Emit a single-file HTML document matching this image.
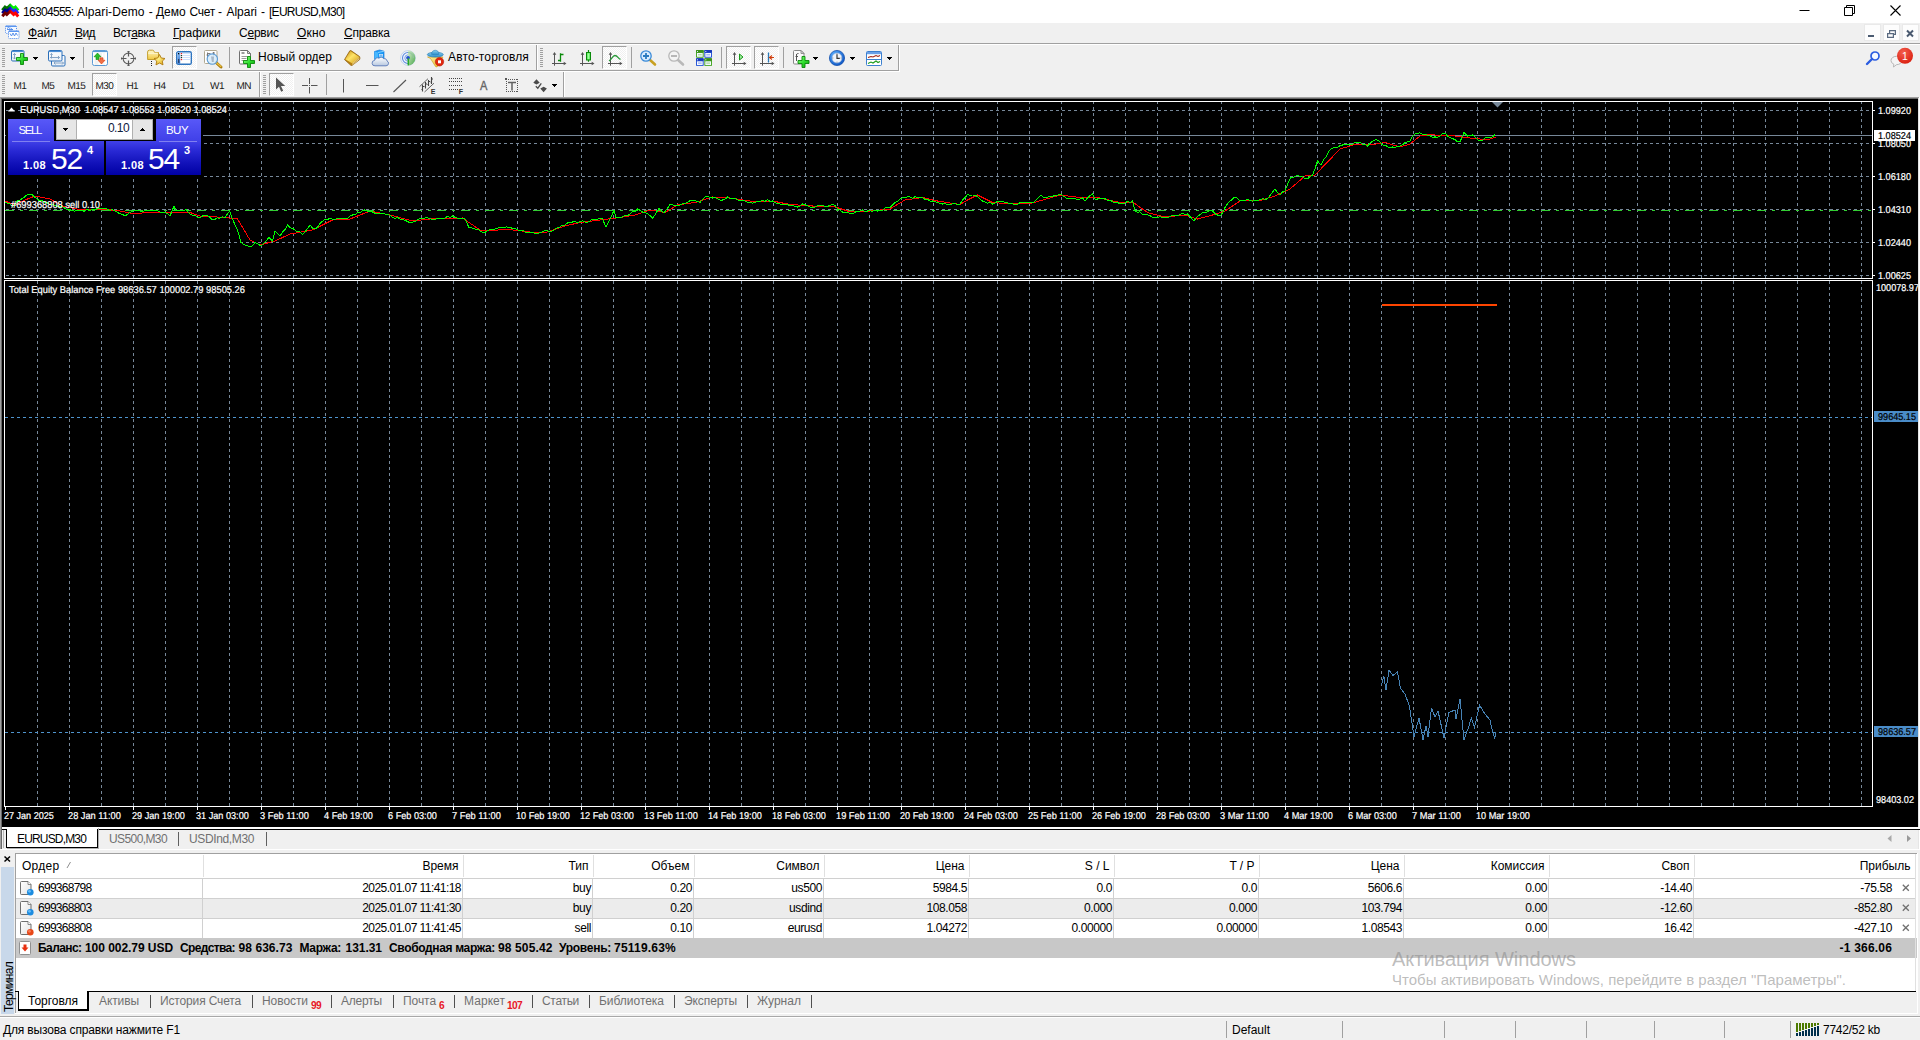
<!DOCTYPE html>
<html lang="ru"><head><meta charset="utf-8"><title>16304555: Alpari-Demo - Демо Счет - Alpari - [EURUSD,M30]</title>
<style>
html,body{margin:0;padding:0;}
body{width:1920px;height:1040px;overflow:hidden;background:#f0f0f0;position:relative;font-family:"Liberation Sans",sans-serif;font-size:12px;color:#000;}
.t{position:absolute;white-space:pre;}
.b{position:absolute;}
.i{position:absolute;overflow:visible;}
u{text-decoration:underline;text-underline-offset:1px;}
.pr{position:absolute;box-sizing:border-box;border:1px solid;border-color:#a0a0a0 #fff #fff #a0a0a0;background:repeating-conic-gradient(#fff 0% 25%,#f0f0f0 0% 50%) 0 0/2px 2px;}
.sep{position:absolute;width:1px;background:#a0a0a0;}
.grip{position:absolute;width:3px;background:repeating-linear-gradient(to bottom,#a0a0a0 0,#a0a0a0 1px,transparent 1px,transparent 2px);}
.da{position:absolute;width:5px;height:1px;background:#000;}.da:before{content:"";position:absolute;left:1px;top:1px;width:3px;height:1px;background:#000;}.da:after{content:"";position:absolute;left:2px;top:2px;width:1px;height:1px;background:#000;}
</style></head><body>

<div class="b" style="left:0;top:0;width:1920px;height:23px;background:#fff"></div>
<svg class="i" style="left:1.5px;top:2px" width="17" height="17" viewBox="0 0 17 17"><defs><linearGradient id="aig" x1="0" y1="0" x2="1" y2="0"><stop offset="0" stop-color="#007000"/><stop offset=".35" stop-color="#007000"/><stop offset=".6" stop-color="#00f000"/><stop offset="1" stop-color="#00f000"/></linearGradient><linearGradient id="aib" x1="0" y1="0" x2="1" y2="0"><stop offset="0" stop-color="#000090"/><stop offset=".35" stop-color="#000090"/><stop offset=".6" stop-color="#2828ff"/><stop offset="1" stop-color="#2828ff"/></linearGradient><linearGradient id="air" x1="0" y1="0" x2="1" y2="0"><stop offset="0" stop-color="#700000"/><stop offset=".35" stop-color="#700000"/><stop offset=".6" stop-color="#ff0000"/><stop offset="1" stop-color="#ff0000"/></linearGradient></defs><path d="M0.300 8.2l2.700-3.200 1.800 1.600 3.400-3.400 3.400 3.400 1.800-1.600 2.800 3.500" fill="none" stroke="url(#aig)" stroke-width="2.900" stroke-linejoin="miter"/><path d="M0.300 11.2l2.700-3.200 1.800 1.600 3.400-3.400 3.400 3.400 1.800-1.600 2.800 3.500" fill="none" stroke="url(#aib)" stroke-width="2.900" stroke-linejoin="miter"/><path d="M0.300 14.2l2.700-3.200 1.800 1.600 3.400-3.400 3.400 3.400 1.800-1.600 2.800 3.500" fill="none" stroke="url(#air)" stroke-width="2.900" stroke-linejoin="miter"/></svg>
<span class="t" style="left:23.00px;top:3.84px;font-size:12px;line-height:16px;letter-spacing:-0.692px;">16304555:</span>
<span class="t" style="left:77.00px;top:3.84px;font-size:12px;line-height:16px;letter-spacing:0.074px;">Alpari-Demo</span>
<span class="t" style="left:148.70px;top:3.84px;font-size:12px;line-height:16px;">-</span>
<span class="t" style="left:156.00px;top:3.84px;font-size:12px;line-height:16px;letter-spacing:-0.031px;">Демо</span>
<span class="t" style="left:189.60px;top:3.84px;font-size:12px;line-height:16px;letter-spacing:-0.339px;">Счет</span>
<span class="t" style="left:218.00px;top:3.84px;font-size:12px;line-height:16px;">-</span>
<span class="t" style="left:226.50px;top:3.84px;font-size:12px;line-height:16px;letter-spacing:-0.030px;">Alpari</span>
<span class="t" style="left:261.00px;top:3.84px;font-size:12px;line-height:16px;">-</span>
<span class="t" style="left:269.00px;top:3.84px;font-size:12px;line-height:16px;letter-spacing:-0.710px;">[EURUSD,M30]</span>
<svg class="i" style="left:0;top:0" width="1920" height="23"><path d="M1799.5 10.5h10" stroke="#000" stroke-width="1" fill="none"/><path d="M1844.5 7.5h8v8h-8zM1846.5 7.5v-2h8v8h-2" stroke="#000" stroke-width="1" fill="none"/><path d="M1890.5 5.5l10 10M1900.5 5.5l-10 10" stroke="#000" stroke-width="1.1" fill="none"/></svg>
<div class="b" style="left:0;top:43px;width:1920px;height:1px;background:#a0a0a0"></div><div class="b" style="left:0;top:44px;width:1920px;height:1px;background:#fff"></div>
<svg class="i" style="left:5px;top:25px" width="15" height="15" viewBox="0 0 15 15"><rect x="0.500" y="0.500" width="11" height="8" rx="1" fill="#f4f8ff" stroke="#4a86e8" stroke-dasharray="1 1"/><path d="M0.500 1.500h11" stroke="#5a96f0" stroke-width="1"/><path d="M2 3.500l1.500-1 1.500 1M5.500 3l2 1.500-2 1M2 4.500h6" fill="none" stroke="#4a86e8" stroke-width="0.900"/><rect x="3.500" y="5.500" width="10.500" height="8" rx="1" fill="#fff" stroke="#4a86e8" stroke-dasharray="1 1"/><path d="M3.500 6.500h10.500" stroke="#5a96f0" stroke-width="1"/><path d="M5 8.500l1.500 2.500 1.500-3 1.500 3 1.500-3 1.500 2.500" fill="none" stroke="#4a86e8" stroke-width="0.900"/></svg>
<span class="t" style="left:28.00px;top:24.84px;font-size:12px;line-height:16px;letter-spacing:-0.200px;"><u>Ф</u>айл</span>
<span class="t" style="left:75.00px;top:24.84px;font-size:12px;line-height:16px;letter-spacing:-0.570px;"><u>В</u>ид</span>
<span class="t" style="left:113.00px;top:24.84px;font-size:12px;line-height:16px;letter-spacing:-0.415px;">Вст<u>а</u>вка</span>
<span class="t" style="left:173.00px;top:24.84px;font-size:12px;line-height:16px;"><u>Г</u>рафики</span>
<span class="t" style="left:239.00px;top:24.84px;font-size:12px;line-height:16px;letter-spacing:-0.232px;">С<u>е</u>рвис</span>
<span class="t" style="left:297.00px;top:24.84px;font-size:12px;line-height:16px;letter-spacing:0.204px;"><u>О</u>кно</span>
<span class="t" style="left:344.00px;top:24.84px;font-size:12px;line-height:16px;letter-spacing:-0.196px;"><u>С</u>правка</span>
<svg class="i" style="left:0;top:0" width="1920" height="44"><rect x="1864.5" y="24.5" width="16" height="16" fill="#fdfdfd" stroke="#e9e9e9"/><rect x="1883.5" y="24.5" width="16" height="16" fill="#fdfdfd" stroke="#e9e9e9"/><rect x="1902.5" y="24.5" width="16" height="16" fill="#fdfdfd" stroke="#e9e9e9"/><rect x="1868" y="35" width="6" height="2" fill="#4a5a70"/><path d="M1887.600 33.600h5.800v3.800h-5.800zM1889.600 33v-2.400h5.800v3.800h-2" fill="none" stroke="#5a6a80" stroke-width="1.200"/><path d="M1887 33.500h7M1889 30.500h7" stroke="#5a6a80" stroke-width="1"/><path d="M1907 30.5l6 6M1913 30.5l-6 6" stroke="#4a5a70" stroke-width="2" fill="none"/></svg>
<div class="b" style="left:0;top:70px;width:899px;height:1px;background:#a0a0a0"></div><div class="b" style="left:0;top:71px;width:900px;height:1px;background:#fff"></div>
<div class="b" style="left:898px;top:45px;width:1px;height:26px;background:#a0a0a0"></div><div class="b" style="left:899px;top:45px;width:1px;height:27px;background:#fff"></div>
<div class="b" style="left:536px;top:45px;width:1px;height:25px;background:#a0a0a0"></div><div class="b" style="left:537px;top:45px;width:1px;height:25px;background:#fff"></div>
<div class="grip" style="left:2px;top:48px;height:19px"></div>
<div class="grip" style="left:540px;top:48px;height:19px"></div>
<div class="sep" style="left:83px;top:47px;height:21px"></div>
<div class="sep" style="left:229px;top:47px;height:21px"></div>
<div class="sep" style="left:631px;top:47px;height:21px"></div>
<div class="sep" style="left:721px;top:47px;height:21px"></div>
<div class="sep" style="left:783px;top:47px;height:21px"></div>
<div class="pr" style="left:172px;top:46px;width:25px;height:23px"></div>
<div class="pr" style="left:602px;top:46px;width:25px;height:23px"></div>
<div class="pr" style="left:726px;top:46px;width:25px;height:23px"></div>
<div class="pr" style="left:754px;top:46px;width:25px;height:23px"></div>
<div class="da" style="left:33px;top:57px"></div>
<div class="da" style="left:70px;top:57px"></div>
<div class="da" style="left:813px;top:57px"></div>
<div class="da" style="left:850px;top:57px"></div>
<div class="da" style="left:887px;top:57px"></div>
<svg class="i" style="left:0;top:0" width="0" height="0"><defs><linearGradient id="gp" x1="0" y1="0" x2="1" y2="1"><stop offset="0" stop-color="#9dff90"/><stop offset=".5" stop-color="#2fe02f"/><stop offset="1" stop-color="#0a9a0a"/></linearGradient><linearGradient id="gw" x1="0" y1="0" x2="0" y2="1"><stop offset="0" stop-color="#fff"/><stop offset="1" stop-color="#e8eef6"/></linearGradient><linearGradient id="gold" x1="0" y1="0" x2="1" y2="1"><stop offset="0" stop-color="#c89010"/><stop offset=".45" stop-color="#ffe468"/><stop offset="1" stop-color="#d09a18"/></linearGradient><linearGradient id="fold" x1="0" y1="0" x2="0" y2="1"><stop offset="0" stop-color="#fff8c8"/><stop offset="1" stop-color="#f0c840"/></linearGradient><radialGradient id="star" cx=".4" cy=".4" r=".7"><stop offset="0" stop-color="#fff48a"/><stop offset="1" stop-color="#e0a820"/></radialGradient><linearGradient id="navb" x1="0" y1="0" x2="0" y2="1"><stop offset="0" stop-color="#8cc0f8"/><stop offset="1" stop-color="#2a6cc8"/></linearGradient><linearGradient id="cl" x1="0" y1="0" x2="0" y2="1"><stop offset="0" stop-color="#fff"/><stop offset="1" stop-color="#b8c8e0"/></linearGradient><linearGradient id="hat" x1="0" y1="0" x2="0" y2="1"><stop offset="0" stop-color="#8cd0f0"/><stop offset="1" stop-color="#2a8cc8"/></linearGradient><linearGradient id="face" x1="0" y1="0" x2="1" y2="1"><stop offset="0" stop-color="#fff0a0"/><stop offset="1" stop-color="#e8b820"/></linearGradient><radialGradient id="clk" cx=".35" cy=".3" r=".8"><stop offset="0" stop-color="#5ab0ff"/><stop offset="1" stop-color="#0a50c0"/></radialGradient><linearGradient id="sig" x1="0" y1="0" x2="1" y2="1"><stop offset="0" stop-color="#d8ecd0"/><stop offset="1" stop-color="#48a848"/></linearGradient></defs></svg>
<svg class="i" style="left:11px;top:50px" width="18" height="16" viewBox="0 0 18 16"><rect x="0.500" y="0.500" width="12.500" height="10.500" rx="1.200" fill="url(#gw)" stroke="#2a6eb8"/><path d="M1 1.500h11.500" stroke="#4a8ed8" stroke-width="1.200"/><path d="M3.500 3.500v5.500M2 5l1.500-1.500 1.500 1.500M2 7.500l1.500 1.500 1.500-1.500" fill="none" stroke="#7a9cc0" stroke-width="0.900"/><path d="M9.5 3.5h3v4h4v3h-4v4h-3v-4h-4v-3h4z" fill="url(#gp)" stroke="#0a8a0a" stroke-width="0.900"/></svg>
<svg class="i" style="left:48px;top:50px" width="18" height="17" viewBox="0 0 18 17"><rect x="3.500" y="5.500" width="13.500" height="10.500" rx="1.200" fill="url(#gw)" stroke="#2a6eb8"/><rect x="0.500" y="0.500" width="13.500" height="10.500" rx="1.200" fill="url(#gw)" stroke="#2a6eb8"/><path d="M1 1.500h12.500" stroke="#4a8ed8" stroke-width="1.200"/><path d="M3.500 3.500v5M2.300 4.700l1.200-1.200 1.200 1.200M2 7.500h9.500M10 6l1.500 1.500-1.500 1.500M6 13h9.500M7.500 11.500l-1.500 1.500 1.500 1.500M14 11.500l1.500 1.500-1.500 1.500" fill="none" stroke="#7a9cc0" stroke-width="0.900"/></svg>
<svg class="i" style="left:92px;top:50px" width="16" height="16" viewBox="0 0 16 16"><rect x="0.500" y="0.500" width="15" height="15" rx="1.800" fill="#fff" stroke="#5b9bd5"/><path d="M1 1.500h14" stroke="#5b9bd5" stroke-width="1.200"/><path d="M8 4h2M11.500 4h1M8 6h2M11.500 6h1M11.500 8h1M2.500 10h2M2.500 12h4M2.500 14h4M11.500 14h1" stroke="#dcdcdc" stroke-width="0.800"/><path d="M5.500 3l3.500 3.800h-2v2.700h-3v-2.700h-2z" fill="#2cc02c" stroke="#0a8a0a" stroke-width="0.600"/><path d="M9.500 14l-3.500-3.800h2v-2.400h3v2.400h2z" fill="#f07048" stroke="#d83808" stroke-width="0.600"/></svg>
<svg class="i" style="left:121px;top:51px" width="15" height="15" viewBox="0 0 15 15"><circle cx="7.500" cy="7.500" r="5.400" fill="none" stroke="#606060" stroke-width="1.100"/><path d="M7.500 0v5.500M7.500 9.500v5.500M0 7.500h5.500M9.500 7.500h5.500" stroke="#585858" stroke-width="1.200"/><path d="M6.500 0.500h2M6.500 14.500h2M0.500 6.500v2M14.500 6.500v2" stroke="#585858" stroke-width="1"/></svg>
<svg class="i" style="left:147px;top:49px" width="19" height="18" viewBox="0 0 19 18"><path d="M0.600 3a1.800 1.800 0 0 1 1.800-1.800h3.200a1.500 1.500 0 0 1 1.400 1l.5 1.300h4v7h-10.900z" fill="url(#fold)" stroke="#c09820" stroke-width="0.900"/><path d="M1.200 4.200h9.500" stroke="#fffbe0" stroke-width="0.900"/><path d="M12.500 5.500l1.800 3.500 3.700.5-2.700 2.600.7 3.800-3.500-1.900-3.500 1.900.7-3.800-2.700-2.600 3.700-.5z" fill="url(#star)" stroke="#b07c10" stroke-width="0.900" stroke-linejoin="round"/><g shape-rendering="crispEdges"><rect x="4" y="12" width="1" height="1" fill="#222"/><rect x="4" y="14" width="1" height="1" fill="#222"/><rect x="4" y="16" width="1" height="1" fill="#222"/></g></svg>
<svg class="i" style="left:176px;top:51px" width="16" height="14" viewBox="0 0 16 14"><rect x="0.700" y="0.700" width="14.600" height="12.600" rx="1.600" fill="#fff" stroke="#2f75bf" stroke-width="1.400"/><rect x="1.400" y="1.400" width="2.800" height="11.200" fill="url(#navb)"/><path d="M6.500 2.500h8M6.500 4.500h8M6.500 6.500h8M6.500 8.500h8" stroke="#c8dcfa" stroke-width="0.900"/><rect x="4.800" y="2" width="1.300" height="1.200" fill="#f02020"/><rect x="4.800" y="4" width="1.300" height="1.200" fill="#223322"/><rect x="4.800" y="6" width="1.300" height="1.200" fill="#223322"/><rect x="4.800" y="8" width="1.300" height="1.200" fill="#f02020"/><rect x="2" y="2" width="1.200" height="1.300" fill="#000"/><rect x="2.100" y="8" width="1.100" height="3.800" fill="#2a3a5a"/></svg>
<svg class="i" style="left:204px;top:50px" width="19" height="18" viewBox="0 0 19 18"><rect x="0.500" y="0.500" width="12.500" height="13" rx="1" fill="#fff" stroke="#b0a890"/><path d="M3.500 2.500v8M2.500 5h2M3.500 3.500h3M9.500 2v4M8.500 3h2.500" stroke="#707070" stroke-width="0.900" fill="none"/><path d="M12 12.500l5 4.500" stroke="#a87808" stroke-width="3" stroke-linecap="round"/><path d="M12.200 12.400l4.600 4.200" stroke="#e8c040" stroke-width="1.400" stroke-linecap="round"/><circle cx="8.300" cy="9.100" r="5.200" fill="#d8ecfa" fill-opacity="0.900" stroke="#5b9bd5" stroke-width="1.100"/><path d="M7 6.500h3l-.3 5.500h-1.800z" fill="#a8b8c8"/></svg>
<svg class="i" style="left:239px;top:50px" width="17" height="19" viewBox="0 0 17 19"><path d="M0.500 1.500a1 1 0 0 1 1-1h7l3 3v9.500a1 1 0 0 1-1 1h-9a1 1 0 0 1-1-1z" fill="#fff" stroke="#707070"/><path d="M8.500 0.500v3h3z" fill="#e0e0e0" stroke="#707070" stroke-width="0.900"/><path d="M2.500 3h3" stroke="#808080" stroke-width="1.600"/><path d="M2.500 6.500h6M2.500 8.500h5M2.500 10.500h3" stroke="#909090" stroke-width="0.900"/><path d="M8.5 6.5h3v4h4v3h-4v4h-3v-4h-4v-3h4z" fill="url(#gp)" stroke="#0a8a0a" stroke-width="0.900"/></svg>
<svg class="i" style="left:344px;top:50px" width="17" height="17" viewBox="0 0 17 17"><path d="M0.500 9.600l5.300-8.800c.6-.4 1-.3 1.500 0l8.300 5.800c.5 1 .5 2 0 3l-7.300 5.700c-.5.300-1 .3-1.500 0z" fill="#b88010" stroke="#8a5a08" stroke-width="0.700"/><path d="M1.200 9.300l5.200-8.200 8.800 6-6.800 6.400z" fill="url(#gold)"/><path d="M8.400 13.700l6.900-6.300M8.400 14.800l7-6" stroke="#f8e8b0" stroke-width="0.700"/></svg>
<svg class="i" style="left:372px;top:50px" width="17" height="17" viewBox="0 0 17 17"><path d="M2.500 1.500l5-1.500 4.500 1.200v8h-9.500z" fill="#1a9af8" stroke="#1a7ad8" stroke-width="0.700"/><path d="M2.500 1.500l3.500 1v7h-3.500z" fill="#48b8ff"/><path d="M6 2.500l6-1.300" stroke="#9cdcff" stroke-width="0.800"/><rect x="7" y="4" width="4" height="2.500" fill="#d8ecff"/><path d="M7.500 5.200h3" stroke="#2a8ae0" stroke-width="0.800"/><path d="M3 15.800a2.700 2.700 0 0 1-.4-5.400 3 3 0 0 1 4.400-2.200 3 3 0 0 1 4.800.6 2.400 2.400 0 0 1 3.200 2.200 2.500 2.500 0 0 1-1 4.800z" fill="url(#cl)" stroke="#5878b8" stroke-width="0.900"/></svg>
<svg class="i" style="left:400px;top:50px" width="17" height="17" viewBox="0 0 17 17"><circle cx="8" cy="8" r="7.400" fill="#f2f6fb" stroke="#b8cce8" stroke-width="0.800"/><path d="M8 0.600a7.400 7.400 0 0 1 0 14.800z" fill="url(#sig)"/><path d="M8 2.500a5.500 5.500 0 0 0 0 11" fill="none" stroke="#5a88e0" stroke-width="1.100"/><path d="M8 4.800a3.200 3.200 0 0 0 0 6.400" fill="none" stroke="#7aa0e8" stroke-width="1"/><path d="M8 2.500a5.500 5.500 0 0 1 5.500 5.500" fill="none" stroke="#8cc0a0" stroke-width="0.900"/><circle cx="8" cy="7.800" r="1.900" fill="#2050d0"/><path d="M8.300 8.300v7" stroke="#28a828" stroke-width="1.500"/></svg>
<svg class="i" style="left:427px;top:50px" width="18" height="18" viewBox="0 0 18 18"><path d="M0.500 7l3 1.500 5 8 1.500.5 6-10z" fill="url(#face)" stroke="#c89818" stroke-width="0.600"/><ellipse cx="8.300" cy="4.600" rx="8" ry="2.400" fill="url(#hat)" stroke="#2a80b8" stroke-width="0.700"/><path d="M4.500 4.300c0-5.400 7.500-5.400 7.500 0a6 2 0 0 1-7.500 0z" fill="url(#hat)" stroke="#2a80b8" stroke-width="0.600"/><circle cx="12.500" cy="11.800" r="4.200" fill="#e02810"/><circle cx="12.500" cy="11.800" r="4.200" fill="none" stroke="#b81808" stroke-width="0.600"/><rect x="11" y="10.300" width="3" height="3" fill="#fff"/></svg>
<svg class="i" style="left:551px;top:51px" width="16" height="17" viewBox="0 0 16 17"><path d="M3.500 14.700V2M1 12.500h13" fill="none" stroke="#555" stroke-width="1"/><path d="M1.700 3.800l1.800-2.800 1.800 2.800zM12.700 10.700l2.800 1.800-2.800 1.800z" fill="#555"/><path d="M9.500 2.200v8.600M9.500 3.500h3M7 9.500h2.500" stroke="#0a8a0a" stroke-width="1.300" fill="none"/></svg>
<svg class="i" style="left:579px;top:51px" width="16" height="17" viewBox="0 0 16 17"><path d="M3.500 14.700V2M1 12.500h13" fill="none" stroke="#555" stroke-width="1"/><path d="M1.700 3.800l1.800-2.800 1.800 2.800zM12.700 10.700l2.800 1.800-2.800 1.800z" fill="#555"/><path d="M9.500 -1v11.800" stroke="#0a8a0a" stroke-width="1.200"/><rect x="7.500" y="1.500" width="4" height="7.500" fill="#5cf05c" stroke="#0a8a0a" stroke-width="1"/><rect x="8.700" y="2.500" width="1.600" height="5.500" fill="#a0ffa0"/></svg>
<svg class="i" style="left:607px;top:51px" width="16" height="17" viewBox="0 0 16 17"><path d="M3.500 14.700V2M1 12.500h13" fill="none" stroke="#555" stroke-width="1"/><path d="M1.700 3.800l1.800-2.800 1.800 2.800zM12.700 10.700l2.800 1.800-2.800 1.800z" fill="#555"/><path d="M2 9.800c2.500-1 3.500-5.300 6-5.300s3 3 5.500 3.800" stroke="#2a9a3a" stroke-width="1.300" fill="none"/></svg>
<svg class="i" style="left:640px;top:50px" width="17" height="17" viewBox="0 0 17 17"><path d="M9.500 9.500l5.500 5" stroke="#c8a020" stroke-width="2.600" stroke-linecap="round"/><circle cx="6" cy="6" r="5.200" fill="#d8ecff" stroke="#3a8ad8" stroke-width="1.300"/><path d="M6 3v6M3 6h6" stroke="#2a7ac0" stroke-width="1.800"/></svg>
<svg class="i" style="left:668px;top:50px" width="17" height="17" viewBox="0 0 17 17"><path d="M9.500 9.500l5.500 5" stroke="#b8b8b8" stroke-width="2.600" stroke-linecap="round"/><circle cx="6" cy="6" r="5.200" fill="#f4f4f4" stroke="#b8b8b8" stroke-width="1.300"/><path d="M3 6h6" stroke="#b0b0b0" stroke-width="1.800"/></svg>
<svg class="i" style="left:696px;top:50px" width="16" height="16" viewBox="0 0 16 16"><rect x="0" y="0" width="7.700" height="7.700" rx="0.800" fill="#4aa828"/><rect x="0" y="0" width="7.700" height="2.500" rx="0.800" fill="#3a9018"/><rect x="1" y="3" width="5.700" height="3.800" fill="#f4f8ff"/><rect x="2" y="4.3" width="3.700" height="1" fill="#4aa828" fill-opacity="0.550"/><rect x="1" y="1" width="1" height="1" fill="#dfe8ff"/><rect x="8.3" y="0" width="7.700" height="7.700" rx="0.800" fill="#2a58d8"/><rect x="8.3" y="0" width="7.700" height="2.500" rx="0.800" fill="#1838b8"/><rect x="9.3" y="3" width="5.700" height="3.800" fill="#f4f8ff"/><rect x="10.3" y="4.3" width="3.700" height="1" fill="#2a58d8" fill-opacity="0.550"/><rect x="9.3" y="1" width="1" height="1" fill="#dfe8ff"/><rect x="0" y="8.3" width="7.700" height="7.700" rx="0.800" fill="#2a58d8"/><rect x="0" y="8.3" width="7.700" height="2.500" rx="0.800" fill="#1838b8"/><rect x="1" y="11.3" width="5.700" height="3.800" fill="#f4f8ff"/><rect x="2" y="12.600000000000001" width="3.700" height="1" fill="#2a58d8" fill-opacity="0.550"/><rect x="1" y="9.3" width="1" height="1" fill="#dfe8ff"/><rect x="8.3" y="8.3" width="7.700" height="7.700" rx="0.800" fill="#4aa828"/><rect x="8.3" y="8.3" width="7.700" height="2.500" rx="0.800" fill="#3a9018"/><rect x="9.3" y="11.3" width="5.700" height="3.800" fill="#f4f8ff"/><rect x="10.3" y="12.600000000000001" width="3.700" height="1" fill="#4aa828" fill-opacity="0.550"/><rect x="9.3" y="9.3" width="1" height="1" fill="#dfe8ff"/></svg>
<svg class="i" style="left:731px;top:51px" width="16" height="17" viewBox="0 0 16 17"><path d="M3.500 14.700V2M1 12.500h13" fill="none" stroke="#555" stroke-width="1"/><path d="M1.700 3.800l1.800-2.800 1.800 2.800zM12.700 10.700l2.800 1.800-2.800 1.800z" fill="#555"/><path d="M8.500 3l3.500 3-3.500 3z" fill="#9ae89a" stroke="#1a9a1a" stroke-width="1"/></svg>
<svg class="i" style="left:759px;top:51px" width="16" height="17" viewBox="0 0 16 17"><path d="M3.500 14.700V2M1 12.500h13" fill="none" stroke="#555" stroke-width="1"/><path d="M1.700 3.800l1.800-2.800 1.800 2.800zM12.700 10.700l2.800 1.800-2.800 1.800z" fill="#555"/><path d="M9.500 1.500v10" stroke="#2a7ab8" stroke-width="1.300"/><path d="M15 6.500h-4M13 4.500l-2.500 2 2.500 2" stroke="#d04010" stroke-width="1.200" fill="none"/></svg>
<svg class="i" style="left:793px;top:50px" width="17" height="19" viewBox="0 0 17 19"><path d="M0.500 1.500a1 1 0 0 1 1-1h6.500l3 3v9.500a1 1 0 0 1-1 1h-8.500a1 1 0 0 1-1-1z" fill="#fafafa" stroke="#888"/><path d="M8 0.500v3h3z" fill="#e4e4e4" stroke="#888" stroke-width="0.900"/><path d="M3.500 4v7M5.500 3.500c-2 0-2 .8-2 2M2.500 6.500h2.500" stroke="#555" stroke-width="1" fill="none"/><path d="M9.0 6.5h3v4h4v3h-4v4h-3v-4h-4v-3h4z" fill="url(#gp)" stroke="#0a8a0a" stroke-width="0.900"/></svg>
<svg class="i" style="left:829px;top:50px" width="16" height="16" viewBox="0 0 16 16"><circle cx="8" cy="8" r="7.600" fill="url(#clk)" stroke="#0a48a8" stroke-width="0.700"/><circle cx="8" cy="8" r="5" fill="#f0f4fa" stroke="#88a8d8" stroke-width="0.600"/><path d="M8 4.300v4h2.800" stroke="#333" stroke-width="1.200" fill="none"/><path d="M8 3.500v.8M12.500 8h-.8M8 12.500v-.8M3.500 8h.8" stroke="#666" stroke-width="0.800"/></svg>
<svg class="i" style="left:866px;top:51px" width="16" height="15" viewBox="0 0 16 15"><rect x="0.500" y="0.500" width="15" height="14" rx="1" fill="#fff" stroke="#3b7fd0"/><rect x="1" y="1" width="14" height="2.200" fill="#6aa0e6"/><path d="M1 8.500h14" stroke="#3b7fd0" stroke-width="1"/><path d="M2 6.500l3-1 2 .5 3-1.500 2 1 2-1" stroke="#a02010" stroke-width="1.100" fill="none"/><path d="M2 12.500l3-1.500 2 1 3-2 2 1.500 2-1" stroke="#1a9a1a" stroke-width="1.100" fill="none"/></svg>
<svg class="i" style="left:1866px;top:51px" width="14" height="14" viewBox="0 0 14 14"><circle cx="9" cy="5" r="4" fill="#f4f8ff" stroke="#2a5ce0" stroke-width="1.700"/><path d="M6 8l-5 5" stroke="#2a5ce0" stroke-width="2.400" stroke-linecap="round"/></svg>
<svg class="i" style="left:1890px;top:47px" width="24" height="21" viewBox="0 0 24 21"><defs><radialGradient id="bdg" cx=".4" cy=".3" r=".8"><stop offset="0" stop-color="#f46050"/><stop offset="1" stop-color="#d81808"/></radialGradient></defs><path d="M1 13.500a5.500 4.200 0 0 1 11 0a5.500 4.200 0 0 1-5.500 4.200l-3 2.300.3-2.800a5.500 4.200 0 0 1-2.800-3.700z" fill="#f4f4f4" stroke="#b0b0b0" stroke-width="0.900"/><circle cx="15" cy="8.800" r="8" fill="url(#bdg)"/><text x="15" y="12.600" text-anchor="middle" font-family="Liberation Sans, sans-serif" font-size="10.500" fill="#fff">1</text></svg>
<span class="t" style="left:258.00px;top:48.84px;font-size:12px;line-height:16px;letter-spacing:0.018px;">Новый ордер</span>
<span class="t" style="left:448.00px;top:48.84px;font-size:12px;line-height:16px;letter-spacing:0.135px;">Авто-торговля</span>
<div class="grip" style="left:2px;top:75px;height:19px"></div>
<div class="grip" style="left:263px;top:75px;height:19px"></div>
<div class="sep" style="left:259px;top:72px;height:25px"></div><div class="sep" style="left:260px;top:72px;height:25px;background:#fff"></div>
<div class="sep" style="left:563px;top:72px;height:25px"></div><div class="sep" style="left:564px;top:72px;height:25px;background:#fff"></div>
<div class="sep" style="left:326px;top:74px;height:21px"></div>
<div class="pr" style="left:92px;top:73px;width:25px;height:23px"></div>
<div class="pr" style="left:269px;top:73px;width:25px;height:23px"></div>
<span class="t" style="left:13.50px;top:80.03px;font-size:10px;line-height:13px;letter-spacing:-0.696px;color:#1a1a1a;text-rendering:geometricPrecision;">M1</span>
<span class="t" style="left:41.50px;top:80.03px;font-size:10px;line-height:13px;letter-spacing:-0.696px;color:#1a1a1a;text-rendering:geometricPrecision;">M5</span>
<span class="t" style="left:67.50px;top:80.03px;font-size:10px;line-height:13px;letter-spacing:-0.584px;color:#1a1a1a;text-rendering:geometricPrecision;">M15</span>
<span class="t" style="left:95.50px;top:80.03px;font-size:10px;line-height:13px;letter-spacing:-0.584px;color:#1a1a1a;text-rendering:geometricPrecision;">M30</span>
<span class="t" style="left:126.50px;top:80.03px;font-size:10px;line-height:13px;letter-spacing:-0.642px;color:#1a1a1a;text-rendering:geometricPrecision;">H1</span>
<span class="t" style="left:153.50px;top:80.03px;font-size:10px;line-height:13px;letter-spacing:-0.142px;color:#1a1a1a;text-rendering:geometricPrecision;">H4</span>
<span class="t" style="left:182.50px;top:80.03px;font-size:10px;line-height:13px;letter-spacing:-0.642px;color:#1a1a1a;text-rendering:geometricPrecision;">D1</span>
<span class="t" style="left:210.00px;top:80.03px;font-size:10px;line-height:13px;letter-spacing:-0.500px;color:#1a1a1a;text-rendering:geometricPrecision;">W1</span>
<span class="t" style="left:236.50px;top:80.03px;font-size:10px;line-height:13px;letter-spacing:-0.526px;color:#1a1a1a;text-rendering:geometricPrecision;">MN</span>
<div class="da" style="left:552px;top:84px"></div>
<svg class="i" style="left:275px;top:77px" width="12" height="16" viewBox="0 0 12 16"><path d="M1 0.500v12l3-2.800 2.200 5 2-.9-2.200-4.900h4.200z" fill="#555"/></svg>
<svg class="i" style="left:302px;top:78px" width="16" height="16" viewBox="0 0 16 16"><path d="M7.500 0v6M7.500 9v6.500M0 7.500h6M9 7.500h6.500" stroke="#555" stroke-width="1"/><rect x="7" y="7" width="1" height="1" fill="#555"/></svg>
<svg class="i" style="left:342px;top:79px" width="3" height="14" viewBox="0 0 3 14"><path d="M1.500 0v13.500" stroke="#555" stroke-width="1"/></svg>
<svg class="i" style="left:366px;top:84px" width="13" height="3" viewBox="0 0 13 3"><path d="M0 1.500h12.500" stroke="#555" stroke-width="1"/></svg>
<svg class="i" style="left:393px;top:79px" width="14" height="14" viewBox="0 0 14 14"><path d="M0.500 13l12.500-12" stroke="#555" stroke-width="1.100"/></svg>
<svg class="i" style="left:420px;top:77px" width="17" height="18" viewBox="0 0 17 18"><path d="M-0.500 9.700l8.500-8M4.500 15l9.500-8.800" stroke="#555" stroke-width="0.900" fill="none"/><path d="M2.500 7.500v7M5.500 5v6.500M8.500 3v6M11.500 0v7" stroke="#444" stroke-width="1.100" fill="none"/><path d="M1.500 12.500h1M2.500 9.500h1.500M4.500 9.500h1M5.500 7h1.500M7.500 7.500h1M8.500 4.500h1.500M10.500 5h1M11.500 2h1.500" stroke="#444" stroke-width="1"/><text x="10.700" y="17" font-family="Liberation Sans, sans-serif" font-size="7" font-weight="bold" fill="#333">E</text></svg>
<svg class="i" style="left:449px;top:77px" width="16" height="18" viewBox="0 0 16 18"><g fill="#444" shape-rendering="crispEdges"><rect x="0" y="1" width="1" height="1"/><rect x="2" y="1" width="1" height="1"/><rect x="4" y="1" width="1" height="1"/><rect x="6" y="1" width="1" height="1"/><rect x="8" y="1" width="1" height="1"/><rect x="10" y="1" width="1" height="1"/><rect x="12" y="1" width="1" height="1"/><rect x="0" y="4" width="1" height="1"/><rect x="2" y="4" width="1" height="1"/><rect x="4" y="4" width="1" height="1"/><rect x="6" y="4" width="1" height="1"/><rect x="8" y="4" width="1" height="1"/><rect x="10" y="4" width="1" height="1"/><rect x="12" y="4" width="1" height="1"/><rect x="0" y="8" width="1" height="1"/><rect x="2" y="8" width="1" height="1"/><rect x="4" y="8" width="1" height="1"/><rect x="6" y="8" width="1" height="1"/><rect x="8" y="8" width="1" height="1"/><rect x="10" y="8" width="1" height="1"/><rect x="12" y="8" width="1" height="1"/><rect x="0" y="12" width="1" height="1"/><rect x="2" y="12" width="1" height="1"/><rect x="4" y="12" width="1" height="1"/><rect x="6" y="12" width="1" height="1"/><rect x="8" y="12" width="1" height="1"/></g><text x="9.800" y="17" font-family="Liberation Sans, sans-serif" font-size="7" font-weight="bold" fill="#333">F</text></svg>
<span class="t" style="left:479.500px;top:77.800px;font-size:12px;line-height:16px;color:#666;-webkit-text-stroke:0.35px #666;transform:scaleX(0.92);transform-origin:0 0">A</span>
<svg class="i" style="left:505px;top:78px" width="14" height="15" viewBox="0 0 14 15"><path d="M1 1.500h12M1 13.500h12M1.500 1v13M12.500 1v13" fill="none" stroke="#555" stroke-dasharray="1 1"/><path d="M3 4.500h8M7 4.500v8" stroke="#606060" stroke-width="1.500" fill="none"/><rect x="0" y="0" width="2" height="2" fill="#555"/></svg>
<svg class="i" style="left:533px;top:79px" width="15" height="14" viewBox="0 0 15 14"><path d="M0.300 3.700l3.200-3.500 3.200 3.500-3.200 1.800zM7.300 9.500l3.300-1.800 3.300 1.800-3.300 3.800z" fill="#4a4a4a"/><path d="M2.800 7.200l2 2 3.500-4.800" fill="none" stroke="#4a4a4a" stroke-width="1.300"/></svg>
<svg class="chart" width="1920" height="731" viewBox="0 97 1920 731" style="position:absolute;left:0;top:97px">
<rect x="0" y="97" width="1920" height="731" fill="#000"/>
<g shape-rendering="crispEdges">
<rect x="0" y="97" width="1919" height="1" fill="#a0a0a0"/><rect x="0" y="97" width="1" height="731" fill="#a0a0a0"/>
<rect x="1" y="98" width="1917" height="1" fill="#696969"/><rect x="1" y="98" width="1" height="730" fill="#696969"/>
<rect x="1918" y="98" width="1" height="731" fill="#e3e3e3"/><rect x="1919" y="97" width="1" height="731" fill="#fff"/>
<path d="M37.5 101V279M69.5 101V279M101.5 101V279M133.5 101V279M165.5 101V279M197.5 101V279M229.5 101V279M261.5 101V279M293.5 101V279M325.5 101V279M357.5 101V279M389.5 101V279M421.5 101V279M453.5 101V279M485.5 101V279M517.5 101V279M549.5 101V279M581.5 101V279M613.5 101V279M645.5 101V279M677.5 101V279M709.5 101V279M741.5 101V279M773.5 101V279M805.5 101V279M837.5 101V279M869.5 101V279M901.5 101V279M933.5 101V279M965.5 101V279M997.5 101V279M1029.5 101V279M1061.5 101V279M1093.5 101V279M1125.5 101V279M1157.5 101V279M1189.5 101V279M1221.5 101V279M1253.5 101V279M1285.5 101V279M1317.5 101V279M1349.5 101V279M1381.5 101V279M1413.5 101V279M1445.5 101V279M1477.5 101V279M1509.5 101V279M1541.5 101V279M1573.5 101V279M1605.5 101V279M1637.5 101V279M1669.5 101V279M1701.5 101V279M1733.5 101V279M1765.5 101V279M1797.5 101V279M1829.5 101V279M1861.5 101V279M37.5 281V806M69.5 281V806M101.5 281V806M133.5 281V806M165.5 281V806M197.5 281V806M229.5 281V806M261.5 281V806M293.5 281V806M325.5 281V806M357.5 281V806M389.5 281V806M421.5 281V806M453.5 281V806M485.5 281V806M517.5 281V806M549.5 281V806M581.5 281V806M613.5 281V806M645.5 281V806M677.5 281V806M709.5 281V806M741.5 281V806M773.5 281V806M805.5 281V806M837.5 281V806M869.5 281V806M901.5 281V806M933.5 281V806M965.5 281V806M997.5 281V806M1029.5 281V806M1061.5 281V806M1093.5 281V806M1125.5 281V806M1157.5 281V806M1189.5 281V806M1221.5 281V806M1253.5 281V806M1285.5 281V806M1317.5 281V806M1349.5 281V806M1381.5 281V806M1413.5 281V806M1445.5 281V806M1477.5 281V806M1509.5 281V806M1541.5 281V806M1573.5 281V806M1605.5 281V806M1637.5 281V806M1669.5 281V806M1701.5 281V806M1733.5 281V806M1765.5 281V806M1797.5 281V806M1829.5 281V806M1861.5 281V806" stroke="#778899" stroke-width="1" stroke-dasharray="3 3" fill="none"/>
<path d="M6 110.5H1872M6 143.5H1872M6 176.5H1872M6 209.5H1872M6 242.5H1872M6 275.5H1872" stroke="#778899" stroke-width="1" stroke-dasharray="3 3" fill="none"/>
<rect x="5" y="135" width="1867" height="1" fill="#778899"/>
<rect x="6" y="117" width="197" height="62" fill="#000"/>
<path d="M5 210.5H1872" stroke="#32cd32" stroke-width="1" stroke-dasharray="9 6 3 6" fill="none"/>
<path d="M5 417.5H1872M5 732.5H1872" stroke="#4f94cd" stroke-width="1" stroke-dasharray="3 3" fill="none"/>
<rect x="4" y="101" width="1869" height="1" fill="#fff"/><rect x="4" y="278" width="1869" height="1" fill="#fff"/><rect x="4" y="101" width="1" height="178" fill="#fff"/><rect x="1872" y="101" width="1" height="178" fill="#fff"/>
<rect x="4" y="280" width="1869" height="1" fill="#fff"/><rect x="4" y="806" width="1869" height="1" fill="#fff"/><rect x="4" y="280" width="1" height="527" fill="#fff"/><rect x="1872" y="280" width="1" height="527" fill="#fff"/>
<rect x="1873" y="110" width="2" height="1" fill="#fff"/>
<rect x="1873" y="143" width="2" height="1" fill="#fff"/>
<rect x="1873" y="176" width="2" height="1" fill="#fff"/>
<rect x="1873" y="209" width="2" height="1" fill="#fff"/>
<rect x="1873" y="242" width="2" height="1" fill="#fff"/>
<rect x="1873" y="275" width="2" height="1" fill="#fff"/>
<rect x="5" y="807" width="1" height="3" fill="#fff"/>
<rect x="69" y="807" width="1" height="3" fill="#fff"/>
<rect x="133" y="807" width="1" height="3" fill="#fff"/>
<rect x="197" y="807" width="1" height="3" fill="#fff"/>
<rect x="261" y="807" width="1" height="3" fill="#fff"/>
<rect x="325" y="807" width="1" height="3" fill="#fff"/>
<rect x="389" y="807" width="1" height="3" fill="#fff"/>
<rect x="453" y="807" width="1" height="3" fill="#fff"/>
<rect x="517" y="807" width="1" height="3" fill="#fff"/>
<rect x="581" y="807" width="1" height="3" fill="#fff"/>
<rect x="645" y="807" width="1" height="3" fill="#fff"/>
<rect x="709" y="807" width="1" height="3" fill="#fff"/>
<rect x="773" y="807" width="1" height="3" fill="#fff"/>
<rect x="837" y="807" width="1" height="3" fill="#fff"/>
<rect x="901" y="807" width="1" height="3" fill="#fff"/>
<rect x="965" y="807" width="1" height="3" fill="#fff"/>
<rect x="1029" y="807" width="1" height="3" fill="#fff"/>
<rect x="1093" y="807" width="1" height="3" fill="#fff"/>
<rect x="1157" y="807" width="1" height="3" fill="#fff"/>
<rect x="1221" y="807" width="1" height="3" fill="#fff"/>
<rect x="1285" y="807" width="1" height="3" fill="#fff"/>
<rect x="1349" y="807" width="1" height="3" fill="#fff"/>
<rect x="1413" y="807" width="1" height="3" fill="#fff"/>
<rect x="1477" y="807" width="1" height="3" fill="#fff"/>
<rect x="1874" y="130" width="41" height="11" fill="#fff"/>
<rect x="1874" y="411" width="44" height="11" fill="#4a8cc8"/>
<rect x="1874" y="726" width="44" height="11" fill="#4a8cc8"/>
<rect x="1382" y="304" width="115" height="2" fill="#ff4500"/>
</g>
<path d="M1492 102h11l-5.5 5.5z" fill="#778899"/>
<polyline points="5.0,201.0 15.0,205.0 25.0,200.0 35.0,196.0 50.0,199.0 62.5,206.0 82.0,210.0 107.0,209.5 120.0,211.0 135.0,214.0 150.0,212.0 175.0,212.0 190.0,212.5 200.0,216.0 225.0,217.5 237.5,219.0 250.0,240.0 260.0,245.0 275.0,241.0 290.0,234.0 312.5,230.0 332.5,220.0 350.0,219.0 370.0,211.0 390.0,215.0 412.5,221.0 430.0,219.0 462.5,218.0 480.0,230.0 492.0,231.0 505.0,229.0 530.0,232.0 547.0,232.0 565.0,226.0 580.0,222.5 600.0,220.0 620.0,217.5 635.0,215.0 650.0,210.0 665.0,212.5 677.5,205.0 695.0,202.5 712.5,197.0 730.0,198.0 750.0,201.0 772.5,201.0 790.0,204.5 812.5,206.0 832.5,206.0 847.5,211.0 870.0,211.0 890.0,209.0 905.0,200.0 922.5,197.5 937.5,201.0 960.0,204.5 967.5,200.0 977.5,195.0 992.5,202.5 1012.5,204.0 1032.5,203.0 1060.0,195.0 1080.0,197.5 1100.0,198.0 1120.0,202.5 1132.5,202.0 1147.5,212.5 1165.0,217.0 1185.0,215.0 1197.5,219.0 1212.5,215.0 1225.0,211.0 1240.0,201.0 1260.0,200.5 1275.0,196.0 1290.0,189.0 1305.0,176.0 1315.0,175.0 1340.0,149.0 1355.0,144.5 1372.5,144.5 1385.0,142.5 1400.0,147.0 1410.0,144.0 1420.0,136.0 1430.0,134.5 1440.0,135.5 1455.0,136.0 1465.0,137.5 1480.0,139.0 1490.0,139.0 1496.0,137.0" fill="none" stroke="#ff0000" stroke-width="1" shape-rendering="crispEdges"/>
<polyline points="5.0,202.5 7.5,203.2 10.0,204.0 12.5,206.0 15.0,204.4 17.5,201.0 20.0,200.0 23.0,198.1 26.0,195.7 29.0,194.0 32.0,194.7 35.0,197.5 37.5,199.3 40.0,201.0 42.5,200.9 45.0,202.8 47.5,203.0 50.0,205.0 52.5,204.3 55.0,205.3 57.5,206.5 60.0,206.0 63.5,207.1 67.0,210.0 69.5,209.4 72.0,210.5 74.5,211.3 77.0,210.5 79.5,210.2 82.0,210.5 84.6,211.4 87.2,209.0 89.8,210.8 92.4,209.2 95.0,209.5 98.0,208.5 101.0,208.3 104.0,208.7 107.0,209.0 109.7,210.4 112.3,209.6 115.0,211.0 117.5,212.4 120.0,213.8 122.5,214.4 125.0,216.0 127.5,214.4 130.0,212.5 132.5,211.1 135.0,210.7 137.5,210.7 140.0,211.0 142.5,211.3 145.0,210.7 147.5,210.3 150.0,210.9 152.5,210.5 155.0,210.5 157.5,210.5 160.0,212.2 162.5,212.5 165.0,212.5 167.5,213.6 170.0,216.0 174.0,206.0 176.0,211.0 178.5,210.8 181.0,210.3 183.5,210.8 186.0,209.5 190.0,214.0 192.5,215.4 195.0,215.2 197.5,217.8 200.0,217.5 203.5,215.3 207.0,215.0 209.5,217.1 212.0,219.5 214.6,219.7 217.2,217.9 219.8,218.3 222.4,216.8 225.0,217.5 229.5,211.0 232.5,219.0 235.0,224.9 237.5,230.0 241.0,242.5 244.0,244.6 247.0,245.7 250.0,247.0 252.5,245.7 255.0,242.5 258.0,243.8 261.0,246.0 263.7,243.6 266.3,240.6 269.0,237.5 272.5,241.0 275.0,231.0 277.5,233.7 280.0,236.0 282.5,232.2 285.0,229.5 287.5,225.0 290.0,227.7 292.5,228.3 295.0,230.0 297.5,231.9 300.0,231.9 302.5,234.5 305.0,231.8 307.5,228.5 310.0,225.0 312.5,228.2 315.0,229.0 317.5,227.3 320.0,223.5 322.5,221.2 325.0,219.0 327.5,219.5 330.0,218.1 332.5,219.3 335.0,219.5 337.5,218.6 340.0,218.3 342.5,218.1 345.0,219.0 347.5,218.5 350.0,215.9 352.5,215.0 355.0,214.5 357.5,212.9 360.0,212.7 362.5,210.5 365.0,209.9 367.5,211.1 370.0,211.7 372.5,212.0 375.0,213.3 377.5,213.6 380.0,214.1 382.5,213.1 385.0,214.0 387.5,214.6 390.0,215.3 392.5,217.4 395.0,218.4 397.5,217.3 400.0,219.0 402.5,219.2 405.0,220.4 407.5,221.4 410.0,223.0 412.5,222.1 415.0,221.5 417.5,219.9 420.0,218.5 422.5,218.6 425.0,218.0 427.5,217.9 430.0,218.5 432.5,219.6 435.0,219.1 437.5,218.9 440.0,219.0 442.5,218.7 445.0,218.2 447.5,216.1 450.0,217.6 452.5,216.0 455.0,217.3 457.5,218.1 460.0,218.5 462.5,218.1 465.0,219.0 469.0,227.5 472.0,228.0 475.0,229.0 477.5,229.0 480.0,231.0 482.5,232.1 485.0,232.5 487.5,230.6 490.0,229.8 492.5,230.0 495.4,228.7 498.2,227.9 501.1,227.7 504.0,227.5 506.7,226.9 509.4,227.3 512.1,228.2 514.8,228.5 517.5,230.0 520.1,230.2 522.8,230.0 525.4,232.6 528.1,232.6 530.7,232.0 533.4,232.8 536.0,234.0 538.9,232.9 541.8,232.2 544.6,230.8 547.5,231.0 550.0,231.2 552.5,230.9 555.0,229.0 557.5,227.9 560.0,227.0 562.5,225.0 565.0,225.0 567.5,223.0 570.0,222.6 572.5,222.0 575.0,221.4 577.5,222.8 580.0,221.2 582.5,220.9 585.0,222.0 587.5,222.5 590.0,220.8 592.5,219.3 595.0,219.5 597.5,219.4 600.0,218.0 602.5,219.0 606.0,227.0 608.7,221.4 611.3,216.8 614.0,210.0 616.0,217.5 618.9,218.0 621.8,217.2 624.6,215.8 627.5,216.0 630.0,213.9 632.5,211.7 635.0,211.4 637.5,209.0 640.0,210.2 642.5,212.0 645.0,212.5 647.5,213.9 650.0,215.5 652.5,218.0 655.8,213.7 659.0,208.0 661.5,211.4 664.0,212.5 667.0,209.1 670.0,204.0 672.5,205.0 675.0,205.3 677.5,205.3 680.0,205.0 682.5,203.5 685.0,203.4 687.5,202.3 690.0,200.7 692.5,201.0 695.0,200.4 697.5,201.5 700.0,202.5 703.0,198.7 706.0,196.0 709.0,197.0 712.0,198.1 715.0,197.5 717.5,198.6 720.0,200.0 722.5,200.0 725.0,199.2 727.5,197.0 730.0,198.9 732.5,198.3 735.0,198.7 737.5,199.5 740.0,201.0 742.5,200.6 745.0,201.0 747.5,202.4 750.0,202.5 752.5,203.1 755.0,202.5 757.5,201.3 760.0,201.3 762.5,200.5 765.0,201.3 767.5,199.8 770.0,201.3 772.5,201.0 775.0,202.8 777.5,203.3 780.0,204.0 782.5,204.1 785.0,205.0 787.5,204.4 790.0,206.0 792.5,205.1 795.0,206.4 797.5,207.0 800.0,206.0 802.5,204.0 805.0,204.8 807.5,205.8 810.0,207.0 812.5,207.9 815.0,207.2 817.5,205.6 820.0,205.4 822.5,205.2 825.0,206.8 827.5,206.4 830.0,205.5 832.5,204.5 835.0,205.5 837.5,209.0 840.0,210.0 842.8,212.2 845.5,212.4 848.2,212.6 851.0,214.0 854.0,213.1 857.0,211.1 860.0,211.0 862.5,209.7 865.0,211.9 867.5,211.0 870.0,210.6 872.5,211.4 875.0,210.1 877.5,211.0 880.0,210.0 882.5,210.2 885.0,208.1 887.5,207.5 890.0,207.5 892.5,204.9 895.0,202.6 897.5,201.3 900.0,199.0 902.5,197.9 905.0,197.8 907.5,196.6 910.0,197.0 912.5,198.1 915.0,196.8 917.5,197.2 920.0,197.6 922.5,197.5 925.0,199.3 927.5,199.1 930.0,201.1 932.5,201.0 935.0,201.8 937.5,202.6 940.0,203.3 942.5,204.0 945.0,203.3 947.5,205.0 950.0,204.7 952.5,203.8 955.0,203.2 957.5,204.9 960.0,204.0 962.5,200.0 965.0,197.6 967.5,194.5 970.0,195.2 972.5,195.0 975.0,195.0 977.5,196.6 980.0,199.0 982.5,201.0 985.0,201.9 987.5,203.2 990.0,202.3 992.5,204.0 995.0,203.1 997.5,201.4 1000.0,201.0 1002.5,201.1 1005.0,202.9 1007.5,202.8 1010.0,203.5 1012.5,204.0 1015.0,204.2 1017.5,204.2 1020.0,202.7 1022.5,202.7 1025.0,202.0 1027.5,202.3 1030.0,202.7 1032.5,203.0 1035.3,200.8 1038.2,197.6 1041.0,195.0 1044.0,198.0 1046.8,197.3 1049.5,196.4 1052.2,196.8 1055.0,195.0 1058.0,195.0 1061.0,194.0 1064.0,196.6 1067.0,198.4 1070.0,199.0 1072.5,198.2 1075.0,198.7 1077.5,199.5 1080.0,199.0 1082.5,198.0 1085.0,201.0 1087.5,197.8 1090.0,195.4 1092.5,194.0 1095.0,199.0 1097.5,199.0 1100.0,198.3 1102.5,198.9 1105.0,198.6 1107.5,200.2 1110.0,200.0 1112.5,201.7 1115.0,203.0 1117.5,202.2 1120.0,204.0 1122.5,203.9 1125.0,203.2 1127.5,201.3 1130.0,202.5 1132.5,201.0 1135.0,210.5 1137.5,212.6 1140.0,211.8 1142.5,214.6 1145.0,214.5 1147.5,214.9 1150.0,215.7 1152.5,217.5 1155.0,217.7 1157.5,217.5 1160.0,216.7 1162.5,217.3 1165.0,217.5 1167.5,217.5 1170.0,216.5 1172.5,215.6 1175.0,215.3 1177.5,215.6 1180.0,214.5 1182.5,213.2 1185.0,214.3 1187.5,214.0 1190.8,217.4 1194.0,221.0 1196.8,217.0 1199.7,214.9 1202.5,212.5 1205.0,212.4 1207.5,211.8 1210.0,210.3 1212.5,211.0 1215.0,213.8 1217.5,215.0 1220.0,216.0 1222.5,212.9 1225.0,207.5 1228.0,203.2 1231.0,200.3 1234.0,197.5 1236.8,197.6 1239.7,200.5 1242.5,201.0 1245.0,200.2 1247.5,199.7 1250.0,200.2 1252.5,201.2 1255.0,200.0 1257.8,200.6 1260.5,199.2 1263.2,198.8 1266.0,199.5 1269.0,197.0 1272.0,192.7 1275.0,189.0 1277.5,192.5 1280.0,195.0 1282.5,192.0 1285.0,191.0 1288.0,183.2 1291.0,177.5 1294.2,177.0 1297.5,175.5 1300.0,176.5 1302.5,176.8 1305.0,179.0 1307.5,178.7 1310.0,176.7 1312.5,175.0 1315.0,168.7 1317.5,161.0 1321.0,165.0 1323.7,159.3 1326.3,156.5 1329.0,151.0 1332.0,148.2 1335.0,147.5 1337.5,147.5 1340.0,145.7 1342.5,145.0 1345.0,144.3 1347.5,144.5 1350.0,144.0 1352.5,144.5 1355.0,142.4 1357.5,142.5 1360.0,142.5 1362.5,144.3 1365.0,144.5 1367.5,146.0 1370.3,142.9 1373.2,140.9 1376.0,139.5 1379.2,141.2 1382.5,145.0 1385.0,145.3 1387.5,146.5 1390.0,148.0 1392.5,147.0 1395.0,147.6 1397.5,146.0 1400.0,146.0 1402.5,144.8 1405.0,142.7 1407.5,141.9 1410.0,141.0 1412.5,136.3 1415.0,134.0 1417.5,133.4 1420.0,132.8 1422.5,134.6 1425.0,134.0 1427.5,135.3 1430.0,135.6 1432.5,137.5 1435.0,136.9 1437.5,137.5 1440.0,136.0 1442.5,133.6 1445.0,133.0 1447.5,136.0 1450.0,137.5 1452.5,138.5 1455.0,139.7 1457.5,141.7 1460.0,142.0 1464.0,132.5 1467.5,136.0 1470.0,135.2 1472.5,135.0 1475.0,137.0 1477.5,139.5 1480.0,141.0 1482.5,140.7 1485.0,138.0 1487.5,137.4 1490.0,137.5 1492.5,136.8 1495.0,134.5" fill="none" stroke="#00ff00" stroke-width="1" shape-rendering="crispEdges"/>
<polyline points="1381.4,685.3 1383.8,676.0 1386.0,690.0 1389.0,670.0 1393.0,675.6 1397.4,671.7 1400.4,688.0 1405.0,694.0 1409.5,706.5 1414.0,736.7 1419.0,718.0 1423.0,739.7 1426.0,726.0 1428.0,736.7 1431.5,708.0 1435.0,717.0 1438.0,711.0 1444.0,738.0 1448.8,712.5 1455.0,710.0 1456.0,719.0 1460.0,699.0 1464.0,739.7 1468.4,727.6 1471.4,718.0 1474.4,727.6 1479.6,705.0 1485.0,714.0 1490.0,720.0 1492.6,732.0 1494.7,738.0 1496.0,732.0" fill="none" stroke="#4682b4" stroke-width="1" shape-rendering="crispEdges"/>
<g font-family="Liberation Sans, sans-serif" font-size="10" style="white-space:pre;text-rendering:geometricPrecision">
<text xml:space="preserve" x="1878" y="113.9" textLength="33" lengthAdjust="spacingAndGlyphs" fill="#fff" stroke="#fff" stroke-width="0.22">1.09920</text>
<text xml:space="preserve" x="1878" y="146.89999999999998" textLength="33" lengthAdjust="spacingAndGlyphs" fill="#fff" stroke="#fff" stroke-width="0.22">1.08050</text>
<text xml:space="preserve" x="1878" y="179.89999999999998" textLength="33" lengthAdjust="spacingAndGlyphs" fill="#fff" stroke="#fff" stroke-width="0.22">1.06180</text>
<text xml:space="preserve" x="1878" y="212.89999999999998" textLength="33" lengthAdjust="spacingAndGlyphs" fill="#fff" stroke="#fff" stroke-width="0.22">1.04310</text>
<text xml:space="preserve" x="1878" y="245.89999999999998" textLength="33" lengthAdjust="spacingAndGlyphs" fill="#fff" stroke="#fff" stroke-width="0.22">1.02440</text>
<text xml:space="preserve" x="1878" y="278.9" textLength="33" lengthAdjust="spacingAndGlyphs" fill="#fff" stroke="#fff" stroke-width="0.22">1.00625</text>
<rect x="1874" y="130" width="41" height="11" fill="#fff" shape-rendering="crispEdges"/>
<text xml:space="preserve" x="1878" y="138.89999999999998" textLength="33" lengthAdjust="spacingAndGlyphs" fill="#000" stroke="#000" stroke-width="0.22">1.08524</text>
<text xml:space="preserve" x="1876" y="291.2" textLength="43" lengthAdjust="spacingAndGlyphs" fill="#fff" stroke="#fff" stroke-width="0.22">100078.97</text>
<text xml:space="preserve" x="1878" y="419.9" textLength="38" lengthAdjust="spacingAndGlyphs" fill="#000" stroke="#000" stroke-width="0.22">99645.15</text>
<text xml:space="preserve" x="1878" y="734.9000000000001" textLength="38" lengthAdjust="spacingAndGlyphs" fill="#000" stroke="#000" stroke-width="0.22">98636.57</text>
<text xml:space="preserve" x="1876" y="803.2" textLength="38" lengthAdjust="spacingAndGlyphs" fill="#fff" stroke="#fff" stroke-width="0.22">98403.02</text>
<text xml:space="preserve" x="4" y="819.2" textLength="49.8" lengthAdjust="spacingAndGlyphs" fill="#fff" stroke="#fff" stroke-width="0.22">27 Jan 2025</text>
<text xml:space="preserve" x="68" y="819.2" textLength="52.8" lengthAdjust="spacingAndGlyphs" fill="#fff" stroke="#fff" stroke-width="0.22">28 Jan 11:00</text>
<text xml:space="preserve" x="132" y="819.2" textLength="52.8" lengthAdjust="spacingAndGlyphs" fill="#fff" stroke="#fff" stroke-width="0.22">29 Jan 19:00</text>
<text xml:space="preserve" x="196" y="819.2" textLength="52.8" lengthAdjust="spacingAndGlyphs" fill="#fff" stroke="#fff" stroke-width="0.22">31 Jan 03:00</text>
<text xml:space="preserve" x="260" y="819.2" textLength="48.8" lengthAdjust="spacingAndGlyphs" fill="#fff" stroke="#fff" stroke-width="0.22">3 Feb 11:00</text>
<text xml:space="preserve" x="324" y="819.2" textLength="48.8" lengthAdjust="spacingAndGlyphs" fill="#fff" stroke="#fff" stroke-width="0.22">4 Feb 19:00</text>
<text xml:space="preserve" x="388" y="819.2" textLength="48.8" lengthAdjust="spacingAndGlyphs" fill="#fff" stroke="#fff" stroke-width="0.22">6 Feb 03:00</text>
<text xml:space="preserve" x="452" y="819.2" textLength="48.8" lengthAdjust="spacingAndGlyphs" fill="#fff" stroke="#fff" stroke-width="0.22">7 Feb 11:00</text>
<text xml:space="preserve" x="516" y="819.2" textLength="53.8" lengthAdjust="spacingAndGlyphs" fill="#fff" stroke="#fff" stroke-width="0.22">10 Feb 19:00</text>
<text xml:space="preserve" x="580" y="819.2" textLength="53.8" lengthAdjust="spacingAndGlyphs" fill="#fff" stroke="#fff" stroke-width="0.22">12 Feb 03:00</text>
<text xml:space="preserve" x="644" y="819.2" textLength="53.8" lengthAdjust="spacingAndGlyphs" fill="#fff" stroke="#fff" stroke-width="0.22">13 Feb 11:00</text>
<text xml:space="preserve" x="708" y="819.2" textLength="53.8" lengthAdjust="spacingAndGlyphs" fill="#fff" stroke="#fff" stroke-width="0.22">14 Feb 19:00</text>
<text xml:space="preserve" x="772" y="819.2" textLength="53.8" lengthAdjust="spacingAndGlyphs" fill="#fff" stroke="#fff" stroke-width="0.22">18 Feb 03:00</text>
<text xml:space="preserve" x="836" y="819.2" textLength="53.8" lengthAdjust="spacingAndGlyphs" fill="#fff" stroke="#fff" stroke-width="0.22">19 Feb 11:00</text>
<text xml:space="preserve" x="900" y="819.2" textLength="53.8" lengthAdjust="spacingAndGlyphs" fill="#fff" stroke="#fff" stroke-width="0.22">20 Feb 19:00</text>
<text xml:space="preserve" x="964" y="819.2" textLength="53.8" lengthAdjust="spacingAndGlyphs" fill="#fff" stroke="#fff" stroke-width="0.22">24 Feb 03:00</text>
<text xml:space="preserve" x="1028" y="819.2" textLength="53.8" lengthAdjust="spacingAndGlyphs" fill="#fff" stroke="#fff" stroke-width="0.22">25 Feb 11:00</text>
<text xml:space="preserve" x="1092" y="819.2" textLength="53.8" lengthAdjust="spacingAndGlyphs" fill="#fff" stroke="#fff" stroke-width="0.22">26 Feb 19:00</text>
<text xml:space="preserve" x="1156" y="819.2" textLength="53.8" lengthAdjust="spacingAndGlyphs" fill="#fff" stroke="#fff" stroke-width="0.22">28 Feb 03:00</text>
<text xml:space="preserve" x="1220" y="819.2" textLength="48.8" lengthAdjust="spacingAndGlyphs" fill="#fff" stroke="#fff" stroke-width="0.22">3 Mar 11:00</text>
<text xml:space="preserve" x="1284" y="819.2" textLength="48.8" lengthAdjust="spacingAndGlyphs" fill="#fff" stroke="#fff" stroke-width="0.22">4 Mar 19:00</text>
<text xml:space="preserve" x="1348" y="819.2" textLength="48.8" lengthAdjust="spacingAndGlyphs" fill="#fff" stroke="#fff" stroke-width="0.22">6 Mar 03:00</text>
<text xml:space="preserve" x="1412" y="819.2" textLength="48.8" lengthAdjust="spacingAndGlyphs" fill="#fff" stroke="#fff" stroke-width="0.22">7 Mar 11:00</text>
<text xml:space="preserve" x="1476" y="819.2" textLength="53.8" lengthAdjust="spacingAndGlyphs" fill="#fff" stroke="#fff" stroke-width="0.22">10 Mar 19:00</text>
<text xml:space="preserve" x="20" y="113.2" textLength="207" lengthAdjust="spacingAndGlyphs" fill="#fff" stroke="#fff" stroke-width="0.22">EURUSD,M30  1.08547 1.08553 1.08520 1.08524</text>
<path d="M8 111.5l3.5-4 3.5 4z" fill="#fff"/>
<text xml:space="preserve" x="9" y="293.2" textLength="236" lengthAdjust="spacingAndGlyphs" fill="#fff" stroke="#fff" stroke-width="0.22">Total Equity Balance Free 98636.57 100002.79 98505.26</text>
<text xml:space="preserve" x="11" y="208.2" textLength="89" lengthAdjust="spacingAndGlyphs" fill="#fff" stroke="#fff" stroke-width="0.22">#699368808 sell 0.10</text>
</g>
<rect x="1918" y="98" width="1" height="731" fill="#e3e3e3"/><rect x="1919" y="97" width="1" height="731" fill="#fff"/>
</svg>
<div class="b" style="left:8px;top:119px;width:46px;height:56px;background:linear-gradient(to bottom,#5858f8 0,#4040e8 22px,#2c2cd8 30px,#1010b8 45px,#0000a4 56px)"></div>
<div class="b" style="left:54px;top:141px;width:50px;height:34px;background:linear-gradient(to bottom,#4040e8 0,#2c2cd8 8px,#1010b8 23px,#0000a4 34px)"></div>
<div class="b" style="left:156px;top:119px;width:45px;height:56px;background:linear-gradient(to bottom,#5858f8 0,#4040e8 22px,#2c2cd8 30px,#1010b8 45px,#0000a4 56px)"></div>
<div class="b" style="left:106px;top:141px;width:50px;height:34px;background:linear-gradient(to bottom,#4040e8 0,#2c2cd8 8px,#1010b8 23px,#0000a4 34px)"></div>
<div class="b" style="left:12px;top:141px;width:38px;height:1px;background:#8080f0"></div>
<div class="b" style="left:159px;top:141px;width:38px;height:1px;background:#8080f0"></div>
<div class="b" style="left:56px;top:119px;width:97px;height:21px;background:#e6e6e6;border:1px solid #b0b0b0;box-sizing:border-box"></div>
<div class="b" style="left:76px;top:120px;width:57px;height:19px;background:#fff;border-left:1px solid #b0b0b0;border-right:1px solid #b0b0b0;box-sizing:border-box"></div>
<div class="da" style="left:63px;top:128px"></div>
<div class="da" style="left:140px;top:130px;transform:scaleY(-1)"></div>
<span class="t" style="left:108.00px;top:120.34px;font-size:12px;line-height:16px;letter-spacing:-0.589px;color:#102040;">0.10</span>
<span class="t" style="left:18.50px;top:122.52px;font-size:11.5px;line-height:15px;letter-spacing:-1.408px;color:#fff;">SELL</span>
<span class="t" style="left:166.00px;top:122.52px;font-size:11.5px;line-height:15px;letter-spacing:-0.549px;color:#fff;">BUY</span>
<span class="t" style="left:23.00px;top:157.69px;font-size:11px;line-height:14px;letter-spacing:0.398px;font-weight:bold;color:#fff;">1.08</span>
<span class="t" style="left:121.00px;top:157.69px;font-size:11px;line-height:14px;letter-spacing:0.398px;font-weight:bold;color:#fff;">1.08</span>
<span class="t" style="left:51.00px;top:139.10px;font-size:30px;line-height:39px;letter-spacing:-1.185px;color:#fff;">52</span>
<span class="t" style="left:148.00px;top:139.10px;font-size:30px;line-height:39px;letter-spacing:-1.185px;color:#fff;">54</span>
<span class="t" style="left:87.00px;top:142.69px;font-size:11px;line-height:14px;font-weight:bold;color:#fff;">4</span>
<span class="t" style="left:184.00px;top:142.69px;font-size:11px;line-height:14px;font-weight:bold;color:#fff;">3</span>
<div class="b" style="left:0;top:828px;width:1920px;height:23px;background:#f0f0f0"></div>
<div class="b" style="left:0;top:827px;width:1920px;height:2px;background:#fff"></div>
<div class="b" style="left:0;top:829px;width:1920px;height:1px;background:#000"></div>
<div class="b" style="left:0;top:827px;width:1px;height:22px;background:#a0a0a0"></div><div class="b" style="left:1px;top:827px;width:1px;height:22px;background:#696969"></div>
<div class="b" style="left:3px;top:830px;width:1px;height:18px;background:#b8b8b8"></div>
<div class="b" style="left:6px;top:827px;width:92px;height:21px;box-sizing:border-box;background:#fff;border:1px solid #000;border-top:none;box-shadow:1px 1px 0 #b0b0b0"></div>
<div class="b" style="left:6px;top:827px;width:1px;height:2px;background:#fff"></div><div class="b" style="left:97px;top:827px;width:1px;height:2px;background:#fff"></div>
<span class="t" style="left:17.00px;top:830.84px;font-size:12px;line-height:16px;letter-spacing:-0.835px;">EURUSD,M30</span>
<span class="t" style="left:109.00px;top:830.84px;font-size:12px;line-height:16px;letter-spacing:-0.597px;color:#707070;">US500,M30</span>
<span class="t" style="left:189.00px;top:830.84px;font-size:12px;line-height:16px;letter-spacing:-0.370px;color:#707070;">USDInd,M30</span>
<div class="b" style="left:178px;top:832px;width:1px;height:14px;background:#606060"></div>
<div class="b" style="left:266px;top:832px;width:1px;height:14px;background:#606060"></div>
<div class="b" style="left:0;top:849px;width:1920px;height:1px;background:#fff"></div><div class="b" style="left:1918px;top:830px;width:1px;height:19px;background:#e6e6e6"></div><div class="b" style="left:1919px;top:830px;width:1px;height:20px;background:#fff"></div>
<svg class="i" style="left:1884px;top:832px" width="30" height="12" viewBox="0 0 30 12"><path d="M7.500 3v7l-4-3.500z" fill="#a8a8a8"/><path d="M23 3v7l4-3.500z" fill="#999"/></svg>
<div class="b" style="left:0;top:850px;width:1920px;height:167px;background:#f0f0f0"></div>
<div class="b" style="left:1px;top:867px;width:13px;height:147px;background:#c8d8ea"></div>
<svg class="i" style="left:4px;top:856px" width="7" height="6" viewBox="0 0 7 6"><path d="M0.500 0.500l5.500 5M6 0.500l-5.500 5" stroke="#000" stroke-width="1.500" fill="none"/></svg>
<div class="b" style="left:15px;top:853px;width:1903px;height:139px;background:#fff;border-left:1px solid #a0a0a0;border-top:1px solid #a0a0a0;box-sizing:border-box"></div>
<div class="b" style="left:16px;top:899px;width:1900px;height:19px;background:#ececec"></div>
<div class="b" style="left:16px;top:938px;width:1901px;height:20px;background:#c8c8c8"></div>
<div class="b" style="left:16px;top:878px;width:1900px;height:1px;background:#d0d0d0"></div>
<div class="b" style="left:16px;top:898px;width:1900px;height:1px;background:#d0d0d0"></div>
<div class="b" style="left:16px;top:918px;width:1900px;height:1px;background:#d0d0d0"></div>
<div class="b" style="left:203px;top:855px;width:1px;height:22px;background:#e0e0e0"></div>
<div class="b" style="left:202px;top:879px;width:1px;height:59px;background:#d0d0d0"></div>
<div class="b" style="left:463px;top:855px;width:1px;height:22px;background:#e0e0e0"></div>
<div class="b" style="left:462px;top:879px;width:1px;height:59px;background:#d0d0d0"></div>
<div class="b" style="left:593px;top:855px;width:1px;height:22px;background:#e0e0e0"></div>
<div class="b" style="left:592px;top:879px;width:1px;height:59px;background:#d0d0d0"></div>
<div class="b" style="left:694px;top:855px;width:1px;height:22px;background:#e0e0e0"></div>
<div class="b" style="left:693px;top:879px;width:1px;height:59px;background:#d0d0d0"></div>
<div class="b" style="left:824px;top:855px;width:1px;height:22px;background:#e0e0e0"></div>
<div class="b" style="left:823px;top:879px;width:1px;height:59px;background:#d0d0d0"></div>
<div class="b" style="left:969px;top:855px;width:1px;height:22px;background:#e0e0e0"></div>
<div class="b" style="left:968px;top:879px;width:1px;height:59px;background:#d0d0d0"></div>
<div class="b" style="left:1114px;top:855px;width:1px;height:22px;background:#e0e0e0"></div>
<div class="b" style="left:1113px;top:879px;width:1px;height:59px;background:#d0d0d0"></div>
<div class="b" style="left:1259px;top:855px;width:1px;height:22px;background:#e0e0e0"></div>
<div class="b" style="left:1258px;top:879px;width:1px;height:59px;background:#d0d0d0"></div>
<div class="b" style="left:1404px;top:855px;width:1px;height:22px;background:#e0e0e0"></div>
<div class="b" style="left:1403px;top:879px;width:1px;height:59px;background:#d0d0d0"></div>
<div class="b" style="left:1549px;top:855px;width:1px;height:22px;background:#e0e0e0"></div>
<div class="b" style="left:1548px;top:879px;width:1px;height:59px;background:#d0d0d0"></div>
<div class="b" style="left:1694px;top:855px;width:1px;height:22px;background:#e0e0e0"></div>
<div class="b" style="left:1693px;top:879px;width:1px;height:59px;background:#d0d0d0"></div>
<div class="b" style="left:1915px;top:854px;width:1px;height:137px;background:#e0e0e0"></div>
<span class="t" style="left:22.00px;top:857.84px;font-size:12px;line-height:16px;letter-spacing:0.284px;">Ордер</span>
<svg class="i" style="left:66px;top:861px" width="6" height="8" viewBox="0 0 6 8"><path d="M1 7l3.500-6" stroke="#808080" stroke-width="0.900"/></svg>
<span class="t" style="right:1461.50px;top:857.84px;font-size:12px;line-height:16px;">Время</span>
<span class="t" style="right:1331.50px;top:857.84px;font-size:12px;line-height:16px;">Тип</span>
<span class="t" style="right:1230.50px;top:857.84px;font-size:12px;line-height:16px;">Объем</span>
<span class="t" style="right:1100.50px;top:857.84px;font-size:12px;line-height:16px;">Символ</span>
<span class="t" style="right:955.50px;top:857.84px;font-size:12px;line-height:16px;">Цена</span>
<span class="t" style="right:810.50px;top:857.84px;font-size:12px;line-height:16px;">S / L</span>
<span class="t" style="right:665.50px;top:857.84px;font-size:12px;line-height:16px;">T / P</span>
<span class="t" style="right:520.50px;top:857.84px;font-size:12px;line-height:16px;">Цена</span>
<span class="t" style="right:375.50px;top:857.84px;font-size:12px;line-height:16px;">Комиссия</span>
<span class="t" style="right:230.50px;top:857.84px;font-size:12px;line-height:16px;">Своп</span>
<span class="t" style="right:9.50px;top:857.84px;font-size:12px;line-height:16px;">Прибыль</span>
<span class="t" style="left:38.00px;top:879.84px;font-size:12px;line-height:16px;letter-spacing:-0.729px;">699368798</span>
<span class="t" style="right:1459.00px;top:879.84px;font-size:12px;line-height:16px;letter-spacing:-0.55px;">2025.01.07 11:41:18</span>
<span class="t" style="right:1329.00px;top:879.84px;font-size:12px;line-height:16px;letter-spacing:-0.4px;">buy</span>
<span class="t" style="right:1228.00px;top:879.84px;font-size:12px;line-height:16px;letter-spacing:-0.4px;">0.20</span>
<span class="t" style="right:1098.00px;top:879.84px;font-size:12px;line-height:16px;letter-spacing:-0.4px;">us500</span>
<span class="t" style="right:953.00px;top:879.84px;font-size:12px;line-height:16px;letter-spacing:-0.4px;">5984.5</span>
<span class="t" style="right:808.00px;top:879.84px;font-size:12px;line-height:16px;letter-spacing:-0.4px;">0.0</span>
<span class="t" style="right:663.00px;top:879.84px;font-size:12px;line-height:16px;letter-spacing:-0.4px;">0.0</span>
<span class="t" style="right:518.00px;top:879.84px;font-size:12px;line-height:16px;letter-spacing:-0.4px;">5606.6</span>
<span class="t" style="right:373.00px;top:879.84px;font-size:12px;line-height:16px;letter-spacing:-0.4px;">0.00</span>
<span class="t" style="right:228.00px;top:879.84px;font-size:12px;line-height:16px;letter-spacing:-0.4px;">-14.40</span>
<span class="t" style="right:28.00px;top:879.84px;font-size:12px;line-height:16px;letter-spacing:-0.4px;">-75.58</span>
<svg class="i" style="left:19.5px;top:881px" width="15" height="16" viewBox="0 0 15 16"><path d="M0.500 1.500a1 1 0 0 1 1-1h6.500l3 3v9a1 1 0 0 1-1 1h-8.500a1 1 0 0 1-1-1z" fill="url(#docg)" stroke="#606060" stroke-width="0.900"/><path d="M8 0.500v3h3" fill="#fff" stroke="#707070" stroke-width="0.800"/><circle cx="10.300" cy="11.300" r="3.300" fill="#1c8ce0"/><circle cx="9.500" cy="10.300" r="1.400" fill="#8cd0ff" fill-opacity="0.700"/></svg>
<svg class="i" style="left:1902px;top:884px" width="8" height="8" viewBox="0 0 8 8"><path d="M0.800 0.800l6 6M6.800 0.800l-6 6" stroke="#707070" stroke-width="1.300" fill="none"/></svg>
<span class="t" style="left:38.00px;top:899.84px;font-size:12px;line-height:16px;letter-spacing:-0.729px;">699368803</span>
<span class="t" style="right:1459.00px;top:899.84px;font-size:12px;line-height:16px;letter-spacing:-0.55px;">2025.01.07 11:41:30</span>
<span class="t" style="right:1329.00px;top:899.84px;font-size:12px;line-height:16px;letter-spacing:-0.4px;">buy</span>
<span class="t" style="right:1228.00px;top:899.84px;font-size:12px;line-height:16px;letter-spacing:-0.4px;">0.20</span>
<span class="t" style="right:1098.00px;top:899.84px;font-size:12px;line-height:16px;letter-spacing:-0.4px;">usdind</span>
<span class="t" style="right:953.00px;top:899.84px;font-size:12px;line-height:16px;letter-spacing:-0.4px;">108.058</span>
<span class="t" style="right:808.00px;top:899.84px;font-size:12px;line-height:16px;letter-spacing:-0.4px;">0.000</span>
<span class="t" style="right:663.00px;top:899.84px;font-size:12px;line-height:16px;letter-spacing:-0.4px;">0.000</span>
<span class="t" style="right:518.00px;top:899.84px;font-size:12px;line-height:16px;letter-spacing:-0.4px;">103.794</span>
<span class="t" style="right:373.00px;top:899.84px;font-size:12px;line-height:16px;letter-spacing:-0.4px;">0.00</span>
<span class="t" style="right:228.00px;top:899.84px;font-size:12px;line-height:16px;letter-spacing:-0.4px;">-12.60</span>
<span class="t" style="right:28.00px;top:899.84px;font-size:12px;line-height:16px;letter-spacing:-0.4px;">-852.80</span>
<svg class="i" style="left:19.5px;top:901px" width="15" height="16" viewBox="0 0 15 16"><path d="M0.500 1.500a1 1 0 0 1 1-1h6.500l3 3v9a1 1 0 0 1-1 1h-8.500a1 1 0 0 1-1-1z" fill="url(#docg)" stroke="#606060" stroke-width="0.900"/><path d="M8 0.500v3h3" fill="#fff" stroke="#707070" stroke-width="0.800"/><circle cx="10.300" cy="11.300" r="3.300" fill="#1c8ce0"/><circle cx="9.500" cy="10.300" r="1.400" fill="#8cd0ff" fill-opacity="0.700"/></svg>
<svg class="i" style="left:1902px;top:904px" width="8" height="8" viewBox="0 0 8 8"><path d="M0.800 0.800l6 6M6.800 0.800l-6 6" stroke="#707070" stroke-width="1.300" fill="none"/></svg>
<span class="t" style="left:38.00px;top:919.84px;font-size:12px;line-height:16px;letter-spacing:-0.729px;">699368808</span>
<span class="t" style="right:1459.00px;top:919.84px;font-size:12px;line-height:16px;letter-spacing:-0.55px;">2025.01.07 11:41:45</span>
<span class="t" style="right:1329.00px;top:919.84px;font-size:12px;line-height:16px;letter-spacing:-0.4px;">sell</span>
<span class="t" style="right:1228.00px;top:919.84px;font-size:12px;line-height:16px;letter-spacing:-0.4px;">0.10</span>
<span class="t" style="right:1098.00px;top:919.84px;font-size:12px;line-height:16px;letter-spacing:-0.4px;">eurusd</span>
<span class="t" style="right:953.00px;top:919.84px;font-size:12px;line-height:16px;letter-spacing:-0.4px;">1.04272</span>
<span class="t" style="right:808.00px;top:919.84px;font-size:12px;line-height:16px;letter-spacing:-0.4px;">0.00000</span>
<span class="t" style="right:663.00px;top:919.84px;font-size:12px;line-height:16px;letter-spacing:-0.4px;">0.00000</span>
<span class="t" style="right:518.00px;top:919.84px;font-size:12px;line-height:16px;letter-spacing:-0.4px;">1.08543</span>
<span class="t" style="right:373.00px;top:919.84px;font-size:12px;line-height:16px;letter-spacing:-0.4px;">0.00</span>
<span class="t" style="right:228.00px;top:919.84px;font-size:12px;line-height:16px;letter-spacing:-0.4px;">16.42</span>
<span class="t" style="right:28.00px;top:919.84px;font-size:12px;line-height:16px;letter-spacing:-0.4px;">-427.10</span>
<svg class="i" style="left:19.5px;top:921px" width="15" height="16" viewBox="0 0 15 16"><path d="M0.500 1.500a1 1 0 0 1 1-1h6.500l3 3v9a1 1 0 0 1-1 1h-8.500a1 1 0 0 1-1-1z" fill="url(#docg)" stroke="#606060" stroke-width="0.900"/><path d="M8 0.500v3h3" fill="#fff" stroke="#707070" stroke-width="0.800"/><circle cx="10.300" cy="11.300" r="3.300" fill="#e84818"/><circle cx="9.500" cy="10.300" r="1.400" fill="#ff9070" fill-opacity="0.700"/></svg>
<svg class="i" style="left:1902px;top:924px" width="8" height="8" viewBox="0 0 8 8"><path d="M0.800 0.800l6 6M6.800 0.800l-6 6" stroke="#707070" stroke-width="1.300" fill="none"/></svg>
<svg class="i" width="0" height="0" style="left:0;top:0"><defs><linearGradient id="docg" x1="0" y1="0" x2="1" y2="1"><stop offset="0" stop-color="#fff"/><stop offset="1" stop-color="#e4e4e4"/></linearGradient></defs></svg>
<svg class="i" style="left:19px;top:941px" width="13" height="15" viewBox="0 0 13 15"><rect x="0.500" y="0.500" width="11" height="13" rx="1" fill="#fff" stroke="#909090"/><path d="M4.500 3.500h3v3h2l-3.500 4-3.500-4h2z" fill="#e83010"/></svg>
<span class="t" style="left:38.00px;top:939.54px;font-size:12px;line-height:16px;letter-spacing:-0.573px;font-weight:bold;">Баланс:</span>
<span class="t" style="left:85.00px;top:939.54px;font-size:12px;line-height:16px;letter-spacing:-0.052px;font-weight:bold;">100 002.79 USD</span>
<span class="t" style="left:180.00px;top:939.54px;font-size:12px;line-height:16px;letter-spacing:-0.619px;font-weight:bold;">Средства:</span>
<span class="t" style="left:238.50px;top:939.54px;font-size:12px;line-height:16px;letter-spacing:0.068px;font-weight:bold;">98 636.73</span>
<span class="t" style="left:299.50px;top:939.54px;font-size:12px;line-height:16px;letter-spacing:-0.302px;font-weight:bold;">Маржа:</span>
<span class="t" style="left:345.50px;top:939.54px;font-size:12px;line-height:16px;letter-spacing:-0.034px;font-weight:bold;">131.31</span>
<span class="t" style="left:389.00px;top:939.54px;font-size:12px;line-height:16px;letter-spacing:-0.348px;font-weight:bold;">Свободная маржа:</span>
<span class="t" style="left:498.00px;top:939.54px;font-size:12px;line-height:16px;letter-spacing:0.124px;font-weight:bold;">98 505.42</span>
<span class="t" style="left:559.00px;top:939.54px;font-size:12px;line-height:16px;letter-spacing:-0.273px;font-weight:bold;">Уровень:</span>
<span class="t" style="left:614.00px;top:939.54px;font-size:12px;line-height:16px;letter-spacing:0.216px;font-weight:bold;">75119.63%</span>
<span class="t" style="left:1839.60px;top:939.54px;font-size:12px;line-height:16px;letter-spacing:0.188px;font-weight:bold;">-1 366.06</span>
<span class="t" style="left:1392.00px;top:946.07px;font-size:20px;line-height:26px;letter-spacing:-0.019px;color:rgba(140,140,140,0.58);">Активация Windows</span>
<span class="t" style="left:1392.00px;top:969.80px;font-size:15px;line-height:20px;letter-spacing:0.014px;color:rgba(140,140,140,0.58);">Чтобы активировать Windows, перейдите в раздел "Параметры".</span>
<div class="b" style="left:1917px;top:853px;width:1px;height:161px;background:#fff"></div><div class="b" style="left:15px;top:1013px;width:1903px;height:1px;background:#fff"></div>
<div class="b" style="left:15px;top:991px;width:3px;height:1px;background:#000"></div>
<div class="b" style="left:88px;top:991px;width:1828px;height:1px;background:#000"></div>
<div class="b" style="left:18px;top:991px;width:71px;height:20px;box-sizing:border-box;background:#fff;border:1px solid #000;border-top:none;border-right-width:2px;border-bottom-width:2px"></div>
<div class="b" style="left:15px;top:992px;width:1px;height:21px;background:#a0a0a0"></div>
<span class="t" style="left:28.00px;top:992.84px;font-size:12px;line-height:16px;letter-spacing:-0.016px;">Торговля</span>
<span class="t" style="left:99.00px;top:992.84px;font-size:12px;line-height:16px;letter-spacing:-0.098px;color:#707070;">Активы</span>
<span class="t" style="left:160.00px;top:992.84px;font-size:12px;line-height:16px;letter-spacing:-0.151px;color:#707070;">История Счета</span>
<span class="t" style="left:262.00px;top:992.84px;font-size:12px;line-height:16px;letter-spacing:-0.065px;color:#707070;">Новости</span>
<span class="t" style="left:341.00px;top:992.84px;font-size:12px;line-height:16px;letter-spacing:-0.202px;color:#707070;">Алерты</span>
<span class="t" style="left:403.00px;top:992.84px;font-size:12px;line-height:16px;letter-spacing:-0.064px;color:#707070;">Почта</span>
<span class="t" style="left:464.00px;top:992.84px;font-size:12px;line-height:16px;letter-spacing:0.061px;color:#707070;">Маркет</span>
<span class="t" style="left:542.00px;top:992.84px;font-size:12px;line-height:16px;letter-spacing:-0.315px;color:#707070;">Статьи</span>
<span class="t" style="left:599.00px;top:992.84px;font-size:12px;line-height:16px;letter-spacing:-0.025px;color:#707070;">Библиотека</span>
<span class="t" style="left:684.00px;top:992.84px;font-size:12px;line-height:16px;letter-spacing:-0.089px;color:#707070;">Эксперты</span>
<span class="t" style="left:757.00px;top:992.84px;font-size:12px;line-height:16px;letter-spacing:0.035px;color:#707070;">Журнал</span>
<div class="b" style="left:150px;top:995px;width:1px;height:13px;background:#505050"></div>
<div class="b" style="left:252px;top:995px;width:1px;height:13px;background:#505050"></div>
<div class="b" style="left:331px;top:995px;width:1px;height:13px;background:#505050"></div>
<div class="b" style="left:393px;top:995px;width:1px;height:13px;background:#505050"></div>
<div class="b" style="left:454px;top:995px;width:1px;height:13px;background:#505050"></div>
<div class="b" style="left:532px;top:995px;width:1px;height:13px;background:#505050"></div>
<div class="b" style="left:589px;top:995px;width:1px;height:13px;background:#505050"></div>
<div class="b" style="left:674px;top:995px;width:1px;height:13px;background:#505050"></div>
<div class="b" style="left:747px;top:995px;width:1px;height:13px;background:#505050"></div>
<div class="b" style="left:811px;top:995px;width:1px;height:13px;background:#505050"></div>
<span class="t" style="left:311.00px;top:999.17px;font-size:10.2px;line-height:13px;letter-spacing:-0.573px;font-weight:bold;color:#e81828;">99</span>
<span class="t" style="left:439.00px;top:999.17px;font-size:10.2px;line-height:13px;font-weight:bold;color:#e81828;">6</span>
<span class="t" style="left:507.00px;top:999.17px;font-size:10.2px;line-height:13px;letter-spacing:-0.673px;font-weight:bold;color:#e81828;">107</span>
<span class="t" style="left:2px;top:1012px;font-size:12px;line-height:14px;transform-origin:0 0;transform:rotate(-90deg);letter-spacing:-0.65px">Терминал</span>
<div class="b" style="left:0;top:1016px;width:1920px;height:1px;background:#a8a8a8"></div><div class="b" style="left:0;top:1017px;width:1920px;height:1px;background:#fff"></div>
<div class="b" style="left:0;top:1018px;width:1920px;height:22px;background:#f0f0f0"></div>
<span class="t" style="left:3.00px;top:1021.84px;font-size:12px;line-height:16px;letter-spacing:-0.152px;">Для вызова справки нажмите F1</span>
<span class="t" style="left:1232.00px;top:1021.84px;font-size:12px;line-height:16px;letter-spacing:-0.003px;">Default</span>
<div class="b" style="left:1226px;top:1021px;width:1px;height:17px;background:#a0a0a0"></div>
<div class="b" style="left:1342px;top:1021px;width:1px;height:17px;background:#a0a0a0"></div>
<div class="b" style="left:1444px;top:1021px;width:1px;height:17px;background:#a0a0a0"></div>
<div class="b" style="left:1515px;top:1021px;width:1px;height:17px;background:#a0a0a0"></div>
<div class="b" style="left:1586px;top:1021px;width:1px;height:17px;background:#a0a0a0"></div>
<div class="b" style="left:1654px;top:1021px;width:1px;height:17px;background:#a0a0a0"></div>
<div class="b" style="left:1724px;top:1021px;width:1px;height:17px;background:#a0a0a0"></div>
<div class="b" style="left:1790px;top:1021px;width:1px;height:17px;background:#a0a0a0"></div>
<svg class="i" style="left:1796px;top:1023px" width="23" height="13" viewBox="0 0 23 13"><rect x="0" y="0" width="2" height="9" fill="#4d7a00"/><rect x="0" y="10" width="2" height="3" fill="#00304d"/><rect x="3" y="0" width="2" height="8" fill="#4d7a00"/><rect x="3" y="9" width="2" height="4" fill="#00304d"/><rect x="6" y="0" width="2" height="7" fill="#4d7a00"/><rect x="6" y="8" width="2" height="5" fill="#00304d"/><rect x="9" y="0" width="2" height="6" fill="#4d7a00"/><rect x="9" y="7" width="2" height="6" fill="#00304d"/><rect x="12" y="0" width="2" height="5" fill="#4d7a00"/><rect x="12" y="6" width="2" height="7" fill="#00304d"/><rect x="15" y="0" width="2" height="4" fill="#4d7a00"/><rect x="15" y="5" width="2" height="8" fill="#00304d"/><rect x="18" y="0" width="2" height="3" fill="#4d7a00"/><rect x="18" y="4" width="2" height="9" fill="#00304d"/><rect x="21" y="0" width="2" height="2" fill="#4d7a00"/><rect x="21" y="3" width="2" height="10" fill="#00304d"/></svg>
<span class="t" style="left:1823.00px;top:1021.84px;font-size:12px;line-height:16px;letter-spacing:-0.238px;">7742/52 kb</span>
</body></html>
